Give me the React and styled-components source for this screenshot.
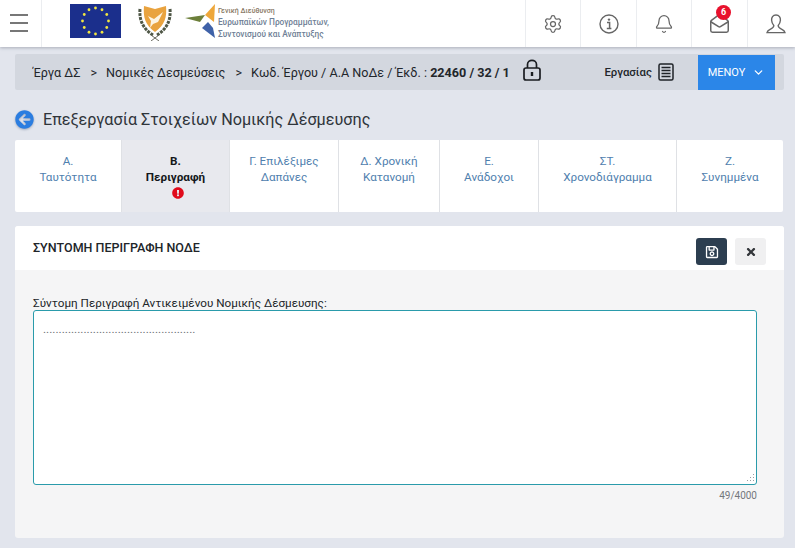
import React from "react";
import styled, { createGlobalStyle } from "styled-components";
import { Settings, Bell, MailOpen, ChevronDown } from "lucide-react";
import { FaArrowCircleLeft, FaExclamationCircle, FaRegSave, FaTimes } from "react-icons/fa";

const GlobalStyle = createGlobalStyle`
  html, body {
    margin: 0;
    padding: 0;
    background: #e2e5ed;
    font-family: Roboto, "Liberation Sans", sans-serif;
    color: #212529;
    overflow: hidden;
  }
  * { box-sizing: border-box; }
`;

const Page = styled.div`
  width: 795px;
  height: 548px;
  display: flex;
  flex-direction: column;
`;

/* HEADER */
const Header = styled.header`
  height: 47px;
  flex: none;
  display: flex;
  background: #fff;
  box-shadow: 0 1px 3px rgba(90, 95, 110, 0.4);
`;

const Burger = styled.button`
  width: 42px;
  height: 47px;
  border: 0;
  border-right: 1px solid #ebedf0;
  background: transparent;
  padding: 14px 13px 0 10px;
  display: flex;
  flex-direction: column;
  gap: 6px;

  span {
    display: block;
    height: 2px;
    background: #777;
  }
`;

const Logos = styled.div`
  flex: 1;
  display: flex;
  align-items: flex-start;
  padding: 4px 0 0 28px;
`;

const BrandText = styled.div`
  margin: 2px 0 0 2px;
  color: #6f7f96;
  font-size: 8.3px;
  font-weight: 500;
  line-height: 12px;
  white-space: nowrap;

  small {
    display: block;
    font-size: 7px;
    line-height: 10px;
    color: #8a7a66;
  }
`;

const IconCell = styled.div`
  position: relative;
  width: ${(p) => p.$w}px;
  height: 47px;
  padding-left: ${(p) => p.$pad || 0}px;
  border-left: 1px solid #ebedf0;
  display: flex;
  align-items: center;
  justify-content: center;
  color: #666;
`;

const Badge = styled.span`
  position: absolute;
  top: 5px;
  left: 24px;
  width: 15px;
  height: 15px;
  border-radius: 50%;
  background: #e8112d;
  color: #fff;
  font-size: 9px;
  font-weight: 700;
  line-height: 15px;
  text-align: center;
`;

/* BREADCRUMB */
const Crumbs = styled.nav`
  height: 36px;
  flex: none;
  margin: 7px 11px 0 15px;
  padding-left: 18px;
  background: #d3d7df;
  border-radius: 2px;
  display: flex;
  align-items: center;
  font-size: 12.6px;
  color: #22262b;
  white-space: nowrap;
`;

const Sep = styled.span`
  margin: 0 9px 0 10px;
  font-size: 12.6px;
`;

const Lock = styled.svg`
  width: 20px;
  height: 24px;
  margin: -5px 0 0 12px;
`;

const Work = styled.div`
  margin-left: auto;
  display: flex;
  align-items: center;
  gap: 6px;
  font-weight: 500;
  font-size: 11.4px;
`;

const MenuButton = styled.button`
  width: 77px;
  height: 35px;
  margin: 0 9px 0 24px;
  border: 0;
  background: #2b86e8;
  color: #fff;
  font: 400 11px Roboto, sans-serif;
  display: flex;
  align-items: center;
  justify-content: center;
  gap: 7px;
`;

/* TITLE */
const TitleRow = styled.div`
  display: flex;
  align-items: center;
  gap: 9px;
  height: 24px;
  margin: 17px 0 9px 15px;
  color: #2f343a;
  font-size: 16.2px;
  white-space: nowrap;

  svg {
    color: #2b7de0;
    filter: drop-shadow(0 1px 1px rgba(40, 60, 100, 0.35));
  }
`;

/* TABS */
const Tabs = styled.div`
  display: grid;
  grid-template-columns: 106px 108px 109px 101px 99px 138px 107px;
  width: 768px;
  height: 72px;
  margin-left: 15px;
  flex: none;
  background: #fff;
  border-radius: 2px;
`;

const Tab = styled.div`
  padding-top: 13px;
  border-left: ${(p) => (p.$first ? "0" : "1px solid #dfe1e5")};
  background: ${(p) => (p.$active ? "#e8e9ee" : "transparent")};
  color: ${(p) => (p.$active ? "#14171a" : "#4f80ae")};
  font-size: 11.7px;
  font-weight: ${(p) => (p.$active ? 700 : 400)};
  line-height: 16px;
  text-align: center;

  svg {
    display: block;
    margin: 2px auto 0;
    transform: translateX(2px);
    color: #e00b1c;
  }
`;

/* CARD */
const Card = styled.section`
  width: 769px;
  height: 312px;
  margin: 14px 0 0 15px;
  flex: none;
  border-radius: 3px;
  background: #f5f5f6;
  display: flex;
  flex-direction: column;
`;

const CardHead = styled.div`
  height: 44px;
  flex: none;
  padding: 12px 18px;
  background: #fff;
  display: flex;
  justify-content: space-between;
  border-radius: 3px 3px 0 0;
`;

const CardTitle = styled.h2`
  margin: 3px 0 0;
  font-size: 12.5px;
  font-weight: 500;
  line-height: 14px;
  color: #212529;
`;

const Actions = styled.div`
  display: flex;
  gap: 8px;
`;

const ActionButton = styled.button`
  width: 31px;
  height: 27px;
  padding: 0;
  border: 0;
  border-radius: 3px;
  display: flex;
  align-items: center;
  justify-content: center;
  background: ${(p) => (p.$dark ? "#2c3e50" : "#f0f0f1")};
  color: ${(p) => (p.$dark ? "#fff" : "#33363a")};
`;

const CardBody = styled.div`
  padding: 26px 27px 0 18px;
  display: flex;
  flex-direction: column;
`;

const FieldLabel = styled.label`
  font-size: 11.7px;
  line-height: 14px;
  color: #212529;
`;

const TextWrap = styled.div`
  position: relative;
  width: 724px;
  height: 175px;
`;

const TextBox = styled.textarea`
  display: block;
  width: 100%;
  height: 100%;
  padding: 10px 9px;
  border: 1px solid #2a9bab;
  border-radius: 3px;
  background: #fff;
  outline: none;
  resize: none;
  color: #6b6f75;
  font: 400 11.8px/16px Roboto, sans-serif;
`;

const Grip = styled.svg`
  position: absolute;
  right: 2px;
  bottom: 2px;
  width: 10px;
  height: 10px;
`;

const Counter = styled.div`
  margin-top: 5px;
  text-align: right;
  font-size: 10px;
  line-height: 12px;
  color: #74777c;
`;

/* LOGOS AND ICONS */
function EuFlag() {
  const stars = Array.from({ length: 12 }, (_, i) => {
    const a = (i * Math.PI) / 6;
    return <circle key={i} cx={25.5 + 13 * Math.sin(a)} cy={17 - 13 * Math.cos(a)} r="1.4" fill="#f2e640" />;
  });
  return (
    <svg width="51" height="34" viewBox="0 0 51 34" style={{ flex: "none" }}>
      <rect width="51" height="34" fill="#1b2f8c" />
      {stars}
    </svg>
  );
}

function CyprusEmblem() {
  return (
    <svg width="34" height="36" viewBox="0 0 34 36" style={{ flex: "none", margin: "1px 0 0 17px" }}>
      <path d="M6 1 L17 4 L28 1 C29 12 27 20 17 27 C7 20 5 12 6 1 Z" fill="#e9a33f" />
      <path d="M10 11 L16 14 L25 7 L20 17 L15 19 L12 23 L13 16 Z" fill="#fdf4e2" />
      <path d="M2 4 C1 15 5 24 15 30 M32 4 C33 15 29 24 19 30" fill="none" stroke="#4f5746" strokeWidth="3" strokeDasharray="3 1" />
      <path d="M13 30 L21 36 M21 30 L13 36" stroke="#6a6a60" strokeWidth="1" />
    </svg>
  );
}

function BrandMark() {
  return (
    <svg width="32" height="36" viewBox="0 0 32 36" style={{ flex: "none", margin: "0 0 0 12px" }}>
      <path d="M31 0 L21 11 L30 18 Z" fill="#eea73a" />
      <path d="M1 14 L21 11 L16 18 Z" fill="#6c7f3a" />
      <path d="M31 34 L18 24 L24 18 L29 24 Z" fill="#3f62a8" />
    </svg>
  );
}

function InfoIcon() {
  return (
    <svg width="20" height="20" viewBox="0 0 20 20" fill="none" stroke="currentColor">
      <circle cx="10" cy="10" r="9" strokeWidth="1.4" />
      <circle cx="10" cy="5.6" r="1.2" fill="currentColor" stroke="none" />
      <path d="M8 8.6 H10.6 V14.2 M7.8 14.4 H12.4" strokeWidth="1.5" />
    </svg>
  );
}

function UserIcon() {
  return (
    <svg width="20" height="20" viewBox="0 0 20 20" fill="none" stroke="currentColor" strokeWidth="1.4">
      <path d="M10 1 C6.8 1 5.4 3.4 5.6 6.2 C5.8 8.8 6.8 10.4 7.8 11.4 C7.9 13 7 13.8 5 14.8 C3 15.8 1.4 16.4 1 18.6 H19 C18.6 16.4 17 15.8 15 14.8 C13 13.8 12.1 13 12.2 11.4 C13.2 10.4 14.2 8.8 14.4 6.2 C14.6 3.4 13.2 1 10 1 Z" />
    </svg>
  );
}

function ListIcon() {
  return (
    <svg width="16" height="18" viewBox="0 0 16 18" fill="none" stroke="#1f2328">
      <rect x="1" y="1" width="14" height="16" rx="1.5" strokeWidth="1.5" />
      <path d="M3.5 4.5 H12.5 M3.5 7.5 H12.5 M3.5 10.5 H12.5 M3.5 13.5 H12.5" strokeWidth="1.5" />
    </svg>
  );
}

const tabs = [
  ["Α.", "Ταυτότητα"],
  ["Β.", "Περιγραφή"],
  ["Γ. Επιλέξιμες", "Δαπάνες"],
  ["Δ. Χρονική", "Κατανομή"],
  ["Ε.", "Ανάδοχοι"],
  ["ΣΤ.", "Χρονοδιάγραμμα"],
  ["Ζ.", "Συνημμένα"],
];

export default function App() {
  return (
    <Page>
      <GlobalStyle />

      <Header>
        <Burger aria-label="menu">
          <span />
          <span />
          <span />
        </Burger>
        <Logos>
          <EuFlag />
          <CyprusEmblem />
          <BrandMark />
          <BrandText>
            <small>Γενική Διεύθυνση</small>
            Ευρωπαϊκών Προγραμμάτων,
            <br />
            Συντονισμού και Ανάπτυξης
          </BrandText>
        </Logos>
        <IconCell $w={55}>
          <Settings size={20} strokeWidth={1.5} />
        </IconCell>
        <IconCell $w={56}>
          <InfoIcon />
        </IconCell>
        <IconCell $w={55}>
          <Bell size={20} strokeWidth={1.5} />
        </IconCell>
        <IconCell $w={56}>
          <MailOpen size={21} strokeWidth={1.7} />
          <Badge>6</Badge>
        </IconCell>
        <IconCell $w={48} $pad={8}>
          <UserIcon />
        </IconCell>
      </Header>

      <Crumbs>
        <span>Έργα ΔΣ</span>
        <Sep>&gt;</Sep>
        <span>Νομικές Δεσμεύσεις</span>
        <Sep>&gt;</Sep>
        <span>
          Κωδ. Έργου / Α.Α ΝοΔε / Έκδ. : <b>22460 / 32 / 1</b>
        </span>
        <Lock viewBox="0 0 20 24" fill="none" stroke="#1a1d21" strokeWidth="1.7">
          <rect x="2" y="10" width="16" height="12" rx="2" />
          <path d="M5.5 10 V6.5 C5.5 1 14.5 1 14.5 6.5 V10" />
          <path d="M10 14 V18" strokeWidth="2.4" />
        </Lock>
        <Work>
          Εργασίας <ListIcon />
        </Work>
        <MenuButton>
          ΜΕΝΟΥ <ChevronDown size={13} strokeWidth={2.4} />
        </MenuButton>
      </Crumbs>

      <TitleRow>
        <FaArrowCircleLeft size={19} />
        Επεξεργασία Στοιχείων Νομικής Δέσμευσης
      </TitleRow>

      <Tabs>
        {tabs.map(([a, b], i) => (
          <Tab key={a} $first={i === 0} $active={i === 1}>
            {a}
            <br />
            {b}
            {i === 1 && <FaExclamationCircle size={12} />}
          </Tab>
        ))}
      </Tabs>

      <Card>
        <CardHead>
          <CardTitle>ΣΥΝΤΟΜΗ ΠΕΡΙΓΡΑΦΗ ΝΟΔΕ</CardTitle>
          <Actions>
            <ActionButton $dark aria-label="save">
              <FaRegSave size={14} />
            </ActionButton>
            <ActionButton aria-label="close">
              <FaTimes size={12} />
            </ActionButton>
          </Actions>
        </CardHead>
        <CardBody>
          <FieldLabel>Σύντομη Περιγραφή Αντικειμένου Νομικής Δέσμευσης:</FieldLabel>
          <TextWrap>
            <TextBox defaultValue="................................................." />
            <Grip viewBox="0 0 10 10" fill="#9a9ea3">
              <rect x="8" y="1" width="1" height="1" />
              <rect x="8" y="4" width="1" height="1" />
              <rect x="8" y="7" width="1" height="1" />
              <rect x="5" y="4" width="1" height="1" />
              <rect x="5" y="7" width="1" height="1" />
              <rect x="2" y="7" width="1" height="1" />
            </Grip>
          </TextWrap>
          <Counter>49/4000</Counter>
        </CardBody>
      </Card>
    </Page>
  );
}
